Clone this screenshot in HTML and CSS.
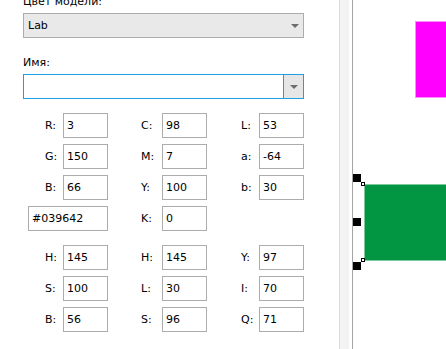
FILE: index.html
```html
<!DOCTYPE html>
<html lang="ru">
<head>
    <meta charset="UTF-8">
    <title>Цвет</title>
    <link rel="stylesheet" href="styles.css">
</head>
<body>

    <div class="window">
        <!-- Панель свойств цвета -->
        <div class="panel">
            <div class="caption caption-top">Цвет модели:</div>
            <div class="combo">
                <span class="combo-text">Lab</span>
                <span class="arrow"></span>
            </div>

            <div class="caption caption-name">Имя:</div>
            <div class="combo name-box">
                <input type="text" class="name-input" value="">
                <span class="drop-btn"><span class="arrow"></span></span>
            </div>

            <!-- RGB / CMYK / Lab -->
            <div class="fields first">
                <div class="field"><label>R:</label><input type="text" value="3"></div>
                <div class="field"><label>C:</label><input type="text" value="98"></div>
                <div class="field"><label>L:</label><input type="text" value="53"></div>

                <div class="field"><label>G:</label><input type="text" value="150"></div>
                <div class="field"><label>M:</label><input type="text" value="7"></div>
                <div class="field"><label>a:</label><input type="text" value="-64"></div>

                <div class="field"><label>B:</label><input type="text" value="66"></div>
                <div class="field"><label>Y:</label><input type="text" value="100"></div>
                <div class="field"><label>b:</label><input type="text" value="30"></div>

                <div class="field"><input type="text" class="hex" value="#039642"></div>
                <div class="field"><label>K:</label><input type="text" value="0"></div>
            </div>

            <!-- HSB / HLS / YIQ -->
            <div class="fields second">
                <div class="field"><label>H:</label><input type="text" value="145"></div>
                <div class="field"><label>H:</label><input type="text" value="145"></div>
                <div class="field"><label>Y:</label><input type="text" value="97"></div>

                <div class="field"><label>S:</label><input type="text" value="100"></div>
                <div class="field"><label>L:</label><input type="text" value="30"></div>
                <div class="field"><label>I:</label><input type="text" value="70"></div>

                <div class="field"><label>B:</label><input type="text" value="56"></div>
                <div class="field"><label>S:</label><input type="text" value="96"></div>
                <div class="field"><label>Q:</label><input type="text" value="71"></div>
            </div>
        </div>

        <!-- Разделитель -->
        <div class="splitter"></div>

        <!-- Холст -->
        <div class="canvas">
            <div class="shape magenta"></div>
            <div class="shape green"></div>
            <div class="handle" style="top: 174px"></div>
            <div class="handle" style="top: 218px"></div>
            <div class="handle" style="top: 262px"></div>
            <div class="corner" style="top: 182px"></div>
            <div class="corner" style="top: 258px"></div>
        </div>
    </div>

</body>
</html>
```

FILE: styles.css
```css
body {
    margin: 0;
    padding: 0;
    background: white;
    font-family: "DejaVu Sans", sans-serif;
    font-size: 11px;
    color: #000;
    overflow: hidden;
}

.window {
    display: flex;
    width: 446px;
    height: 349px;
}

/* Панель слева */
.panel {
    width: 281px;
    padding-left: 23px;
    padding-right: 35px;
    flex-shrink: 0;
}

.caption {
    height: 13px;
    line-height: 13px;
}

.caption-top {
    margin-top: -5px;
}

.caption-name {
    margin-top: 18px;
}

.combo {
    position: relative;
    display: flex;
    align-items: center;
    box-sizing: border-box;
    height: 25px;
    margin-top: 5px;
    border: 1px solid #acacac;
    background: #e9e9e9;
}

.combo-text {
    flex: 1;
    padding-left: 4px;
}

.arrow {
    width: 0;
    height: 0;
    margin-right: 4px;
    border-left: 4px solid transparent;
    border-right: 4px solid transparent;
    border-top: 4px solid #6d6d6d;
}

.name-box {
    border-color: #1ba1e3;
    background: white;
}

.name-input {
    flex: 1;
    height: 100%;
    border: none;
    padding: 0 4px;
    font: inherit;
    outline: none;
}

.drop-btn {
    display: flex;
    align-items: center;
    justify-content: center;
    width: 19px;
    height: 100%;
    border-left: 1px solid #1ba1e3;
    background: #e6e6e6;
}

.drop-btn .arrow {
    margin: 1px 0 0 1px;
}

/* Поля значений */
.fields {
    display: grid;
    grid-template-columns: 85px 99px 97px;
    grid-auto-rows: 25px;
    row-gap: 6px;
    margin-top: 14px;
}

.field {
    display: flex;
    align-items: center;
    justify-content: flex-end;
}

.field label {
    flex: 1;
}

.fields .field:nth-child(3n+1) label {
    max-width: 18px;
}

.fields .field:nth-child(3n+2) label {
    max-width: 21px;
}

.fields .field:nth-child(3n) label {
    max-width: 18px;
}

.field input {
    box-sizing: border-box;
    width: 45px;
    height: 25px;
    margin: 0;
    padding: 0 3px;
    border: 1px solid #acacac;
    font: inherit;
    color: #000;
    background: white;
    outline: none;
}

.field input.hex {
    width: 80px;
}

/* Разделитель */
.splitter {
    width: 9px;
    border-left: 1px solid #dcdcdc;
    background: #f3f3f3;
    margin-right: 3px;
    flex-shrink: 0;
}

/* Холст */
.canvas {
    position: relative;
    flex: 1;
    border-left: 1px solid #a5a5a5;
    overflow: hidden;
}

.shape {
    position: absolute;
    box-sizing: border-box;
    height: 77px;
}

.magenta {
    left: 62px;
    top: 21px;
    width: 60px;
    background: #ff00ff;
    border: 1px solid #ff8cff;
}

.green {
    left: 11px;
    top: 184px;
    width: 120px;
    background: #039642;
    border: 1px solid #7ccb9d;
}

.handle {
    position: absolute;
    left: 0;
    width: 8px;
    height: 8px;
    background: #000;
}

.corner {
    position: absolute;
    left: 8px;
    box-sizing: border-box;
    width: 4px;
    height: 4px;
    border: 1px solid #000;
    background: white;
}
```
